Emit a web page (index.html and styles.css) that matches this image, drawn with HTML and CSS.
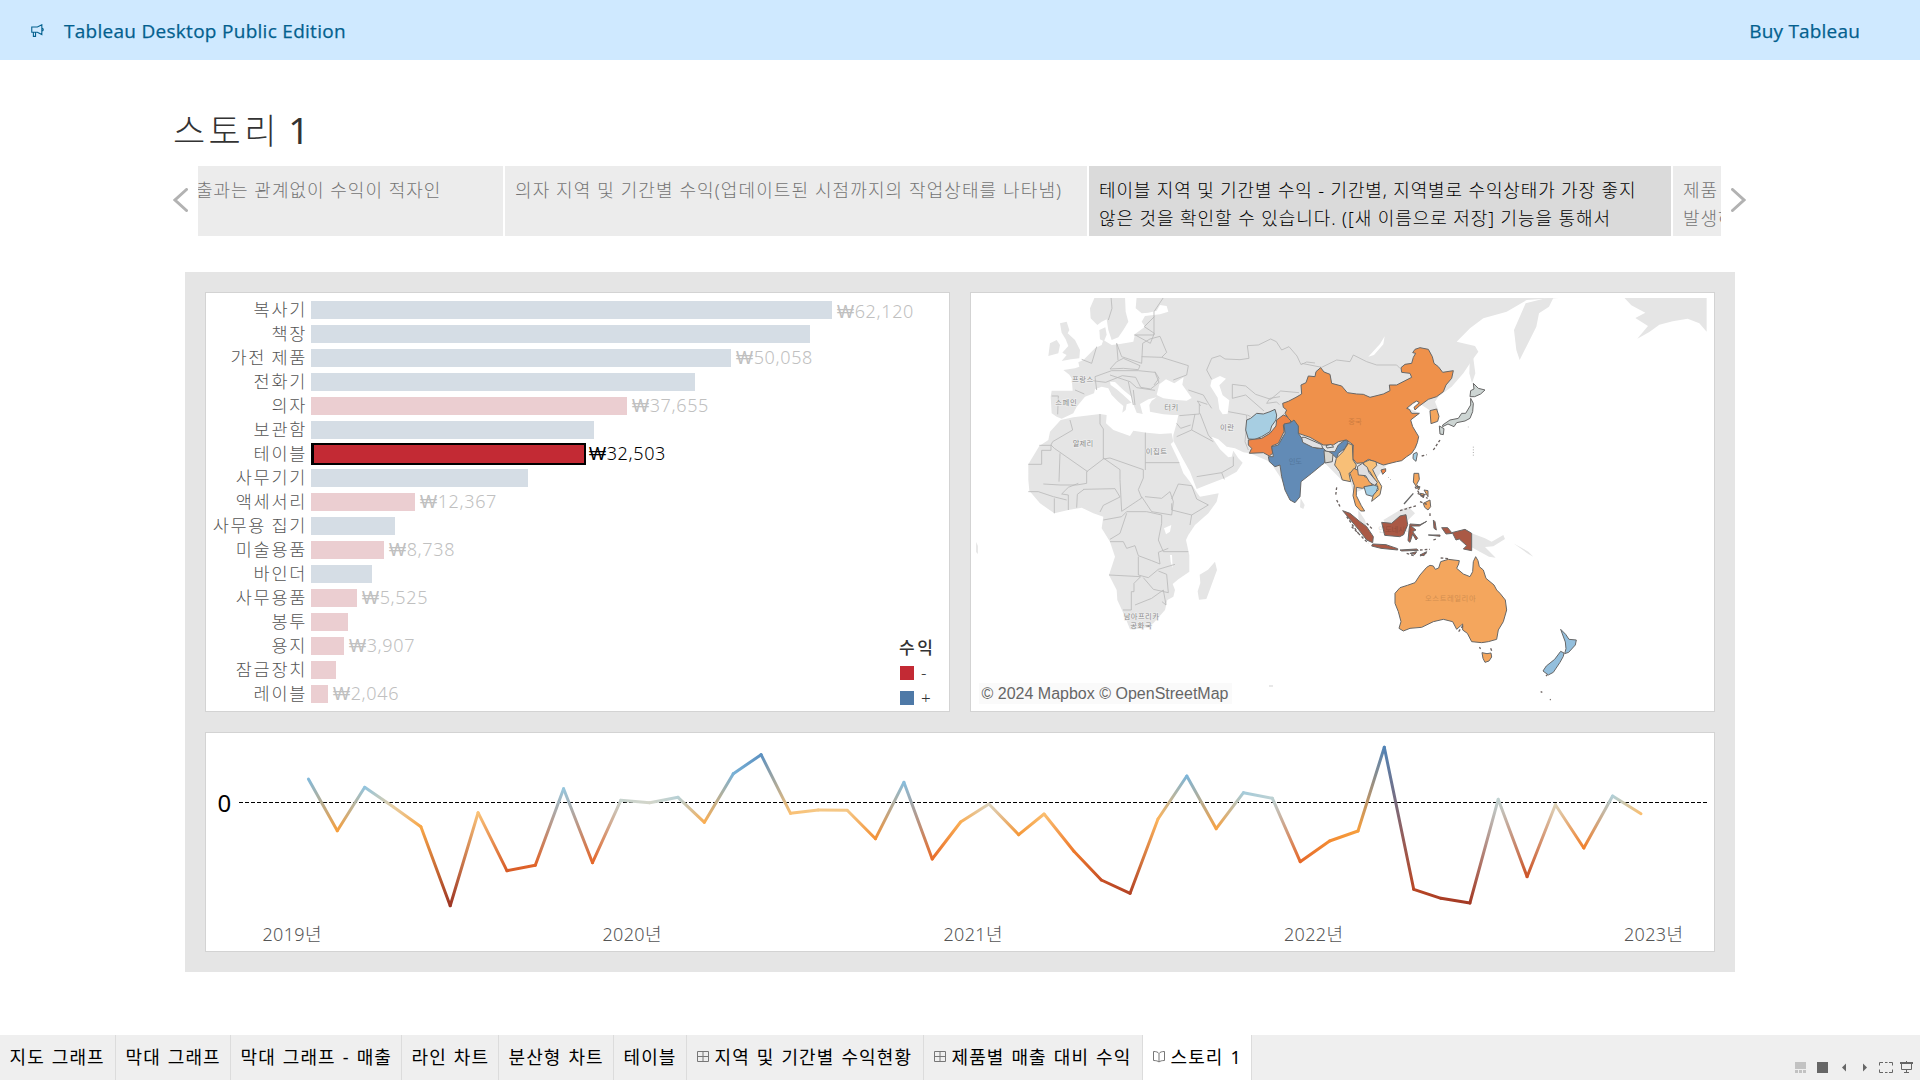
FILE: index.html
```html
<!DOCTYPE html>
<html lang="ko">
<head>
<meta charset="utf-8">
<title>스토리 1</title>
<link rel="stylesheet" href="styles.css">
</head>
<body>
<header class="banner">
  <svg class="horn" viewBox="0 0 12 12"><path d="M.7 2.7h5.2L10 .7v9L5.900 7.600H.7zM2.200 7.800v3.600h2V7.800M10 3.800c1.800.4 1.800 2.500 0 2.900"/></svg>
  <span class="edition">Tableau Desktop Public Edition</span>
  <a class="buy">Buy Tableau</a>
</header>
<main class="story">
  <h1 class="title">스토리 <span>1</span></h1>
  <nav class="points">
    <svg class="arrow" viewBox="0 0 15 24"><path d="M13.500 1.500L2 12l11.500 10.500"/></svg>
    <div class="strip">
      <div class="point first"><p class="t1">출과는 관계없이 수익이 적자인</p></div>
      <div class="point"><p class="t2">의자 지역 및 기간별 수익(업데이트된 시점까지의 작업상태를 나타냄)</p></div>
      <div class="point selected"><p class="t3">테이블 지역 및 기간별 수익 - 기간별, 지역별로 수익상태가 가장 좋지</p><p class="t4">않은 것을 확인할 수 있습니다. ([새 이름으로 저장] 기능을 통해서</p></div>
      <div class="point"><p class="t3">제품</p><p class="t4">발생하</p></div>
    </div>
    <svg class="arrow right" viewBox="0 0 15 24"><path d="M1.500 1.500L13 12 1.500 22.500"/></svg>
  </nav>
  <section class="dashboard">
    <div class="panel bars">
      <div class="row pos"><span class="name">복사기</span><i class="bar" style="width:521px"></i><span class="val low"><span class="won">₩</span>62,120</span></div>
      <div class="row pos"><span class="name">책장</span><i class="bar" style="width:499px"></i></div>
      <div class="row pos"><span class="name">가전 제품</span><i class="bar" style="width:420px"></i><span class="val"><span class="won">₩</span>50,058</span></div>
      <div class="row pos"><span class="name">전화기</span><i class="bar" style="width:384px"></i></div>
      <div class="row neg"><span class="name">의자</span><i class="bar" style="width:316px"></i><span class="val"><span class="won">₩</span>37,655</span></div>
      <div class="row pos"><span class="name">보관함</span><i class="bar" style="width:283px"></i></div>
      <div class="row picked"><span class="name">테이블</span><i class="bar" style="width:275px"></i><span class="val"><span class="won">₩</span>32,503</span></div>
      <div class="row pos"><span class="name">사무기기</span><i class="bar" style="width:217px"></i></div>
      <div class="row neg"><span class="name">액세서리</span><i class="bar" style="width:104px"></i><span class="val"><span class="won">₩</span>12,367</span></div>
      <div class="row pos"><span class="name">사무용 집기</span><i class="bar" style="width:84px"></i></div>
      <div class="row neg"><span class="name">미술용품</span><i class="bar" style="width:73px"></i><span class="val"><span class="won">₩</span>8,738</span></div>
      <div class="row pos"><span class="name">바인더</span><i class="bar" style="width:61px"></i></div>
      <div class="row neg"><span class="name">사무용품</span><i class="bar" style="width:46px"></i><span class="val"><span class="won">₩</span>5,525</span></div>
      <div class="row neg"><span class="name">봉투</span><i class="bar" style="width:37px"></i></div>
      <div class="row neg"><span class="name">용지</span><i class="bar" style="width:33px"></i><span class="val"><span class="won">₩</span>3,907</span></div>
      <div class="row neg"><span class="name">잠금장치</span><i class="bar" style="width:25px"></i></div>
      <div class="row neg"><span class="name">레이블</span><i class="bar" style="width:17px"></i><span class="val"><span class="won">₩</span>2,046</span></div>
      <div class="legend"><b>수익</b><span><i class="sw red"></i>-</span><span><i class="sw blue"></i>+</span></div>
    </div>
    <div class="panel map">
      <svg viewBox="971 293 743 418" width="743" height="418">
        <clipPath id="tiles"><rect x="976" y="298" width="733" height="408"/></clipPath>
        <g clip-path="url(#tiles)">
        <g transform="translate(960 280) scale(.33333)">
          <g class="land">
            <path d="M405 50L390 85 392 115 412 135 425 125 440 118 445 150 455 180 475 172 490 150 505 125 497 95 495 50Z"/>
            <path d="M418 150l18-8 4 22-8 20-12-6z"/>
            <path d="M300 130l20-5 8 25-5 10 22 20 15 30-2 25-25 3-28 5 15-18-13-7 18-20-8-20-12-20zM270 190l20-10 10 15-5 25-30 8z"/>
            <path d="M530 50L527 85 545 100 565 98 590 92 600 75 620 78 625 95 600 103 555 108 545 125 555 140 525 162 520 185 480 192 455 195 430 180 425 195 405 205 385 225 370 240 355 247 358 260 345 265 310 270 328 284 335 295 338 332 275 332 272 350 275 400 290 410 305 416 340 400 350 380 375 350 402 340 405 328 425 320 445 325 455 345 475 365 490 378 487 398 497 390 500 373 515 368 490 345 470 328 452 315 450 305 465 306 490 330 515 350 522 378 530 398 548 402 540 372 565 358 590 352 575 362 568 375 570 395 610 403 640 405 655 405 650 430 640 465 640 482 665 530 690 575 710 627 740 615 800 592 830 575 848 548 835 535 820 512 815 530 805 532 780 508 755 470 775 478 800 500 825 505 850 517 870 520 930 545 960 590 1000 670 1022 605 1095 550 1145 600 1170 600 1180 640 1230 620 1280 555 1370 500 1370 460 1350 420 1380 400 1345 385 1370 365 1408 390 1435 390 1425 365 1435 350 1475 320 1510 280 1530 250 1555 215 1545 198 1490 185 1530 145 1570 115 1640 95 1700 60 1860 50Z"/>
            <path d="M302 420L340 412 420 402 440 405 438 430 460 450 510 468 520 452 560 458 600 462 635 460 640 485 632 492 655 540 670 580 690 605 712 640 720 650 776 640 770 665 745 700 705 735 685 765 678 780 688 826 688 875 655 898 638 912 645 930 640 950 622 960 615 990 580 1030 545 1046 510 1048 495 1010 472 960 470 930 447 885 465 830 450 785 425 745 430 710 400 700 365 683 325 690 283 700 240 670 208 632 205 600 205 553 238 498 265 480 270 455Z"/>
            <path d="M765 845l6 25-20 55-12 32-22 2-4-25 8-25-2-25 25-15zM1022 655l12 20-4 12-10-5z"/>
            <path d="M1195 690l20 30 10 40-10-10-20-35zM1270 720l50-30 25-10 20 20-30 30-40 30z"/>
            <path d="M1535 760l40 15 20 10 35-20 5 12-35 22-25 2 32 32-20-3-52-28zM1660 790l45 25 15 15-15-8z"/>
            <path d="M1530 220l8 0 8 60-10 30-8-30zM1662 150l35-80 60-15 25-5-15 30-30 20-8 40-30 60-20 40-10-30z"/>
            <path d="M1990 50h250v105l-22-25-35-14-45 8-40 10-30 22-36 20 32-38-38-24 30-16-42-22z"/>
          </g>
          <g class="water">
            <path d="M590 345l8-32 20-15 25 12 28-18-4 22 28 40-15 8-30-2-40-5zM755 300l25-12 18 8-20 20 10 30 20 15-5 40-15 2-10-15-5-35-22-35zM612 745l22-10-4 20-12 8zM630 825l6 0 2 40-6-20zM1225 230l35-38 14-23-4 24-28 32z"/>
          </g>
          <g class="border">
            <path d="M453 50l3 35-11 35M612 50l-30 45v70l-60 0M583 110l-30 30 30 20-12 30-45-25M548 190l-3 60-60-20-15-40 4 50M410 200l-15 50-30-12M545 230l60 2 15-15-20-48-30 8-22 13M605 232l80 25-5 28-40 15M470 245l20-10 50 22-5 12-45-4-40 2zM405 290l50-18 80 0 50 5 12 30-25 20-30-5-15-30-40-5-50 20-40-5M450 285l60 20 20 18 55 8M505 305l15 70M520 330l5 45M345 330l28 12M275 348l20 0-2 55M405 290l5 40M585 275l12 20-15 20"/>
            <path d="M755 298l-15-28 15-35 25-8 15 10 45 2 27-4-5-38 33-2 37-18 17 8 16 25 22-10 24 28 12 26 17-8 25 3M1025 250l60 12 45-22 40 5 10-20 40 20 30 10 60 0 10 10M817 355v-42l40 5 30 25 45 15 30-25 55 5M805 395l55 10 0 30-5 50 10 25M817 355l40-10 55 48M862 405l10 5M960 350l-30 5-10 15 30-4 8 8M685 330l45 15 15 25 10 15M718 372l0 30-60 5M722 378l-10-15 30 10M720 400l25 65 10 12M650 470l45-20 10-48M695 450l65 35M710 590l75-12 35-20 0-28M785 578l8 20M650 430l12 15 30-10"/>
            <path d="M330 420l8 30-60 35-5 10 10 10 100 70M420 402l0 30 10 15 0 90-50 38 0 35-30 5-50 0-50-3M238 496h35v15h-28v42h-40M300 520l-3 85M430 537l20-3 100 35 0 25-15 35 10 25-60 40-5-95 0-30-50-35M556 458v112M556 548h102M370 628l95-2 15 25-50 25-10 20M350 683l2-40 20-15M325 690v-45l-20-3 20-20 30-12M320 660l-40-10-45-15-30 0M283 700v-45M545 650l30 45 60 10 5-40-10-30-25 20-50-5M635 670l0 20 60 15 50-30-35-18-15-40-40-5-20 45M695 705l-5 30M430 720l55-10 15-15 60 0 45 10 0 25-10 50 15 35 75 0M500 700l-20 60-30 18M450 785h40l10 20 25-8 10 30 40 15 25 10-5-35 30-12M535 830v55l30 8 30-25 50-15M447 885l95 5-20 20v25h-8v55h-25M550 893l30 35 45 10-5-55-25-10M610 930l-35 25-50 20M610 930l8 45-12-10"/>
          </g>
          <g class="tag">
            <text x="336" y="306" textLength="64">프랑스</text><text x="286" y="375" textLength="64">스페인</text>
            <text x="613" y="391" textLength="42">터키</text><text x="780" y="451" textLength="42">이란</text>
            <text x="338" y="499" textLength="62">알제리</text><text x="557" y="522" textLength="64">이집트</text>
            <text x="491" y="1018" textLength="106">남아프리카</text><text x="511" y="1045" textLength="64">공화국</text>
          </g>
          <g class="country" transform="translate(780 120)">
            <path fill="#a7cee2" d="M80 300L92 295 110 280 130 282 150 275 165 268 170 285 168 300 155 318 150 335 125 350 105 358 85 357 77 330Z"/>
            <path fill="#ed8447" d="M85 360L125 355 150 340 168 318 170 300 190 285 215 295 210 310 190 315 192 335 175 370 155 378 158 400 148 408 130 398 88 400 95 385 85 375Z"/>
            <path fill="#ef914b" d="M190 262L188 250 205 244 228 232 245 222 243 195 258 188 265 168 285 170 288 155 302 143 312 156 330 163 335 190 365 198 382 218 410 222 430 223 450 232 490 222 510 212 508 195 530 195 575 172 570 160 545 157 543 143 555 133 575 130 580 112 587 100 578 98 585 88 600 83 625 88 637 110 642 130 655 140 668 157 700 152 695 175 678 195 670 215 650 230 625 238 598 258 585 270 582 262 598 248 590 243 578 250 560 265 568 268 575 280 598 280 572 300 578 320 596 350 592 368 585 385 575 400 560 410 545 422 530 425 490 435 465 425 445 418 430 428 410 430 398 415 400 375 380 360 355 365 340 375 310 375 270 352 235 340 220 310 205 295 195 280 200 270Z"/>
            <path fill="#628bb6" d="M192 312L212 308 222 300 235 318 235 340 250 362 290 385 310 385 320 395 345 395 355 375 375 360 385 365 375 385 355 400 350 415 340 405 318 412 312 430 305 435 275 460 243 485 240 530 225 548 210 540 195 510 185 470 180 435 165 440 148 425 145 410 160 410 155 380 175 375 195 340Z"/>
            <path fill="#e1e1e3" d="M245 352l10 0 50 22 3 12-30-4-30-15zM318 377l15-4 8 8-20 3z"/>
            <path fill="#d8d6cf" d="M312 392l15 3 12 8-2 22-22 4z"/>
            <path fill="#f8bf77" d="M385 370l12 5 2 45 10 15-5 15-17 10 5 25-25-5-8-25-15-20 5-20 20-20z"/>
            <path fill="#f4a65d" d="M390 460l12-15 20 10 12 15 15 5 8 20-30 10-18-3 0 25 15 30 10 16-12 0-15-16-8-30 4-30z"/>
            <path fill="#f8bf77" d="M430 428l18-8 20 5 2 12-12 12 15 30 12 20-5 25-25 20 5-20 15-15-8-25-18-30-15-12z"/>
            <path fill="#dfdfe1" d="M412 440l15-10 15 12 5 15 25 30-8 10-15-10-12-20-22-2z"/>
            <path fill="#a2cee5" d="M432 500l30-5 12 5-5 15-12 14-18-5z"/>
            <path fill="#ef8445" d="M483 450l14-4 0 8-9 9z"/>
            <path fill="#a2cee5" d="M580 402l10-5 2 5-4 22-9-8z"/>
            <path fill="#f4a65d" d="M630 272l20-5 7 22-4 15-20 7z"/>
            <path fill="#cdd5d3" d="M760 190l15 15 20 5-13 12-18 8-14 0 2-18 10-5zM752 235l8 15-2 25-8 20-15 8-25 5-8 12-18-8-16 8 0-5 22-15 25-5 10-15 12 0 15-25zM658 318l14 8-2 18-10-2z"/>
            <path fill="#f4a65d" d="M582 460l14 0 2 18-8 15 8 10-8-2-10-15zM610 550l20-10 2 20-8 10-10-8zM590 500l10 0-4 10zM600 520l12 2-2 12zM612 510l12 2 0 18z"/>
            <path class="thin" d="M580 520l-28 32"/>
            <path fill="#aa5945" d="M368 572l22 8 30 25 20 15 20 30-2 18-18-8-25-32zM458 672l40 2 35 12 0 4-50-5-28-7zM485 607l30 3 25-22 18-4 5 30-12 30-12 6-45-4zM570 612l30 2 20-10-22 14-25 0 15 12-10 5 15 20-5 5-10-18-8 25-6-5 3-30zM540 690l50-3 5 4-50 2zM665 623l18 0 12 15 40-10 20 12v52l-25-5 10-10-22-20-10 3-10-20-20 2zM570 700l20-5-5 8zM600 705l20-10-8 12zM640 600l5 5 4 25-7-5zM625 645l35 0 0 4z"/>
            <path class="isles" d="M350 502l-3 25M350 540l10 20M380 590l35 50M395 620l50 50M605 408l15-4M640 390l20-30M540 572l50-15M600 690l30-2M640 660l10-4M440 610l20 20M560 700l25 8M630 580l0 10M593 520l30 15M600 545l25 10M585 500l20 30 15-10"/>
            <path class="ocean" d="M505 472l10 10M745 320l0 2M760 380l0 30"/>
          </g>
          <g class="country" transform="translate(1080 480)">
            <path fill="#f4a65d" d="M225 460L240 443 262 436 285 428 300 405 320 382 330 376 340 378 346 388 356 384 362 365 385 358 418 362 416 372 410 385 430 402 450 410 458 395 460 365 467 350 474 362 478 380 490 390 498 415 522 435 530 450 540 460 556 480 560 510 550 545 535 570 530 598 505 605 485 608 455 605 442 580 428 570 428 552 410 568 398 545 370 538 340 545 305 562 270 565 250 573 237 565 243 545 235 515 225 490Z"/>
            <path fill="#f4a65d" d="M486 638l15 3 12-2 2 12-8 12-12 4-6-12z"/>
            <path fill="#93bfdd" d="M722 568l15 15 10 15 22 2-3 15-20 22-12 4 4-15-2-20zM722 634l10 5-2 10-10 18-20 30-15 8-16-12 10-15 25-20z"/>
            <path class="isles" d="M362 354l25 2M416 575l14-20M478 622l4 4M512 625l4 10M678 708l4-4M662 755l5 2M690 778l2 2M300 348l20-10"/>
          </g>
          <g class="tag faint">
            <text x="1165" y="432" textLength="40">중국</text><text x="986" y="552" textLength="40">인도</text>
            <text x="1255" y="756" textLength="100">인도네시아</text><text x="1395" y="963" textLength="152">오스트레일리아</text>
          </g>
        </g>
        </g>
        <path fill="#e8e8e8" d="M976 542l2 4v8l-2-2zM1269 685h4v2h-4z"/>
        <rect x="979" y="683" width="253" height="21" fill="#fafafa"/>
        <text class="credit" x="981.500" y="699" textLength="247">© 2024 Mapbox © OpenStreetMap</text>
      </svg>
    </div>
    <div class="panel trend">
      <svg id="trend" viewBox="206 733 1508 218" width="1508" height="218">
        <path class="zero" d="M239 802.500H1707"/>
        <text class="origin" x="217.500" y="812">0</text>
        <g class="years">
          <text x="262.500" y="941" textLength="59">2019년</text><text x="602.500" y="941" textLength="59">2020년</text>
          <text x="943.500" y="941" textLength="59">2021년</text><text x="1284" y="941" textLength="59">2022년</text>
          <text x="1624" y="941" textLength="59">2023년</text>
        </g>
      </svg>
    </div>
  </section>
</main>
<footer class="tabs">
  <div class="tab w1">지도 그래프</div>
  <div class="tab w2">막대 그래프</div>
  <div class="tab w3">막대 그래프 - 매출</div>
  <div class="tab w4">라인 차트</div>
  <div class="tab w5">분산형 차트</div>
  <div class="tab w6">테이블</div>
  <div class="tab w7"><svg class="ti" viewBox="0 0 12 12"><path d="M.5.5h11v10H.5zM6 .5v10M.5 5.500h11"/></svg>지역 및 기간별 수익현황</div>
  <div class="tab w8"><svg class="ti" viewBox="0 0 12 12"><path d="M.5.5h11v10H.5zM6 .5v10M.5 5.500h11"/></svg>제품별 매출 대비 수익</div>
  <div class="tab w9 active"><svg class="ti" viewBox="0 0 12 12"><path d="M.5.5C3 .5 5 1 6 2.500 7 1 9 .5 11.500.5v9C9 9.500 7 10 6 11 5 10 3 9.500.5 9.500zM6 2.500V11"/></svg>스토리 1</div>
  <svg class="tools" viewBox="1795 1061 119 13" width="119" height="13">
    <path fill="#c2c2c2" d="M1795 1062h11v7h-11zM1795 1070h3v3h-3zM1799 1070h3v3h-3zM1803 1070h3v3h-3z"/>
    <path fill="#666" d="M1817 1062h11v11h-11zM1842 1067.500l4-4v8zM1867 1067.500l-4-4v8z"/>
    <path fill="none" stroke="#666" d="M1879.500 1065.500v-3h3.500M1889 1062.500h3.500v3M1892.500 1069.500v3h-3.500M1883 1072.500h-3.500v-3M1885 1062.500h2.500M1885 1072.500h2.500"/>
    <path fill="none" stroke="#666" d="M1901.500 1063v6.500h10v-6.500M1906.500 1069v4M1904 1072.500h5"/>
    <path fill="#666" d="M1900 1062h13v2h-13zM1906 1061h1v1h-1z"/>
  </svg>
</footer>
<script src="trend.js"></script>
</body>
</html>
```
FILE: styles.css
```css
* { box-sizing: border-box; }
body { margin: 0; width: 1920px; height: 1080px; overflow: hidden; display: flex; flex-direction: column; background: #fff; font-family: "Noto Sans", "Noto Sans CJK KR", sans-serif; color: #000; }
.banner { height: 60px; flex: none; display: flex; align-items: center; padding: 0 60px 2px 31px; background: #cfe9ff; color: #03608e; font-family: "Open Sans", sans-serif; font-size: 19px; letter-spacing: .28px; -webkit-text-stroke: .25px #03608e; }
.horn { width: 13px; height: 13px; margin: 2px 20px 0 0; fill: none; stroke: #03608e; stroke-width: 1; }
.edition { flex: 1; padding-top: 3px; white-space: nowrap; }
.buy { padding-top: 3px; white-space: nowrap; letter-spacing: .18px; }
.story { flex: 1; display: flex; flex-direction: column; }
.title { margin: 43px 0 0 173px; height: 63px; line-height: 54px; font-size: 35px; font-weight: 300; letter-spacing: 3.4px; word-spacing: -4px; color: #333; }
.title span { font-size: 37px; font-weight: 400; }
.points { display: flex; height: 70px; align-items: flex-start; padding-left: 173px; }
.arrow { width: 15px; height: 24px; margin-top: 22px; margin-right: 10px; fill: none; stroke: #b2b2b2; stroke-width: 3; stroke-linecap: round; }
.arrow.right { margin: 22px 0 0 10px; }
.strip { width: 1523px; height: 70px; display: flex; gap: 2px; overflow: hidden; }
.point { flex: none; width: 582px; height: 70px; padding: 10px 0 0 10px; background: #ececec; color: #747474; font-size: 18px; font-weight: 300; overflow: hidden; }
.point p { margin: 0; height: 28px; line-height: 28px; white-space: nowrap; }
.point.first { width: 305px; padding-left: 0; }
.point.first p { margin-left: -2px; }
.point.selected { background: #dadada; color: #000; }
.t1 { letter-spacing: 1px; }
.t2 { letter-spacing: 1.1px; }
.t3 { letter-spacing: .86px; }
.t4 { letter-spacing: .92px; }
.dashboard { width: 1550px; height: 700px; margin: 36px 0 0 185px; padding: 20px; display: grid; grid-template: 420px 220px / 745px 745px; gap: 20px; background: #e5e5e5; }
.panel { background: #fff; border: 1px solid #d3d3d3; overflow: hidden; }
.panel > svg { display: block; }
.bars { padding-top: 5px; position: relative; }
.row { height: 24px; display: flex; align-items: center; font-size: 18px; font-weight: 300; white-space: nowrap; color: #c0c0c0; }
.name { width: 101px; margin-right: 4px; padding-bottom: 1px; text-align: right; color: #555; font-size: 17.5px; letter-spacing: 1.7px; word-spacing: -1px; line-height: 23px; }
.bar { height: 18px; flex: none; }
.pos .bar { background: #d5dde5; }
.neg .bar { background: #ebced1; }
.picked { color: #000; }
.picked .bar { height: 22px; background: #c32a34; border: 2px solid #000; border-left-width: 3px; }
.val { margin-left: 5px; padding-bottom: 1px; line-height: 23px; letter-spacing: .65px; }
.won { font-family: "Liberation Sans", Arial, sans-serif; }
.val.low { position: relative; top: 2px; }
.picked .val { margin-left: 3px; }
.legend { position: absolute; left: 694px; top: 342px; display: flex; flex-direction: column; font-size: 17px; font-weight: 300; color: #333; }
.legend b { margin-left: -1px; line-height: 25px; letter-spacing: 2.5px; font-weight: 500; }
.legend span { display: flex; align-items: center; gap: 7px; height: 25px; }
.sw { width: 14px; height: 14px; }
.red { background: #c32a34; }
.blue { background: #4e79a7; }
.trend { grid-column: 1 / 3; }
.land path { fill: #e5e5e5; }
.water path { fill: #fff; }
.border path { fill: none; stroke: #b9b9b9; stroke-width: 2.5; stroke-linejoin: round; }
.tag text { font: 22px "Noto Sans CJK KR", sans-serif; fill: #8c8c8c; stroke: #eee; stroke-width: 4px; paint-order: stroke; }
.tag.faint text { stroke: none; fill: #000; opacity: .15; }
.country path { stroke: #666; stroke-width: 3; stroke-linejoin: round; }
.country path.thin { fill: none; stroke-width: 4; }
.country path.isles { fill: none; stroke: #6b6260; stroke-width: 4; stroke-dasharray: 8 6; }
.country path.ocean { fill: none; stroke: #aaa; stroke-width: 3; stroke-dasharray: 3 5; }
.credit { font: 16px "Liberation Sans", Arial, sans-serif; fill: #666; }
.zero { stroke: #000; stroke-dasharray: 4 2; }
.origin { font-size: 24px; }
.years { font-size: 18px; font-weight: 300; fill: #555; }
.segments { fill: none; stroke-width: 3; stroke-linecap: round; }
.tabs { height: 45px; flex: none; display: flex; background: #efefef; }
.tab { display: flex; align-items: center; height: 45px; padding: 0 0 3px 9.5px; border-right: 1px solid #dcdcdc; font-size: 18px; letter-spacing: 1.1px; word-spacing: 1.2px; white-space: nowrap; }
.w1 { width: 116px; }
.w2 { width: 115px; }
.w3 { width: 171px; }
.w4 { width: 97px; }
.w5 { width: 115px; }
.w6 { width: 73px; }
.w7 { width: 237px; }
.w8 { width: 219px; }
.w9 { width: 109px; }
.active { background: #fff; }
.ti { width: 12px; height: 12px; margin: 2px 6px 0 0; fill: none; stroke: #777; }
.tools { margin: 26px 6px 0 auto; }
```
FILE: trend.js
```js
const points = [[308.4,779],[337.3,830.7],[364.7,787.3],[393.5,807],[420.9,826.7],[450.2,905.7],[478.1,812.7],[506.9,870.7],[535.3,865.3],[563.6,788.7],[592.5,862.7],[620.8,800.3],[649.7,802.7],[678,797.3],[704.4,822.3],[733.3,773.7],[761.1,754.7],[790.5,813.3],[818.3,810],[847.2,810.3],[875.5,838.7],[903.9,782.3],[932.2,859],[960.6,822],[988.9,804],[1018.7,834.7],[1044.1,814],[1073.9,851.3],[1101.3,880],[1130.1,893.3],[1158,819],[1186.8,776],[1216.2,828.7],[1243.5,792.7],[1272.4,798.3],[1300.2,861.7],[1329.6,841],[1358,831],[1384.3,747.3],[1413.7,889.3],[1441,898.3],[1469.9,903],[1498.2,799.3],[1527.1,876.7],[1555.4,804.7],[1583.8,848],[1612.6,796],[1641,813.7]];
const scale = [[747,81,130,182],[757,95,150,196],[776,124,181,217],[788,147,197,222],[797,181,208,214],[803,213,213,200],[810,245,200,135],[816,253,185,100],[830,246,160,62],[848,241,128,44],[862,230,104,42],[880,200,80,38],[906,158,54,36]];
function colour(y) {
  let i = 1;
  while (i < scale.length - 1 && scale[i][0] < y) i++;
  const a = scale[i - 1], b = scale[i];
  const t = Math.max(0, Math.min(1, (y - a[0]) / (b[0] - a[0])));
  return 'rgb(' + [1, 2, 3].map(k => Math.round(a[k] + (b[k] - a[k]) * t)).join(',') + ')';
}
let defs = '', lines = '';
for (let i = 1; i < points.length; i++) {
  const [x1, y1] = points[i - 1], [x2, y2] = points[i];
  defs += `<linearGradient id="s${i}" gradientUnits="userSpaceOnUse" x1="${x1}" y1="${y1}" x2="${x2}" y2="${y2}"><stop stop-color="${colour(y1)}"/><stop offset="1" stop-color="${colour(y2)}"/></linearGradient>`;
  lines += `<path stroke="url(#s${i})" d="M${x1} ${y1}L${x2} ${y2}"/>`;
}
document.getElementById('trend').insertAdjacentHTML('beforeend', `<defs>${defs}</defs><g class="segments">${lines}</g>`);
```
